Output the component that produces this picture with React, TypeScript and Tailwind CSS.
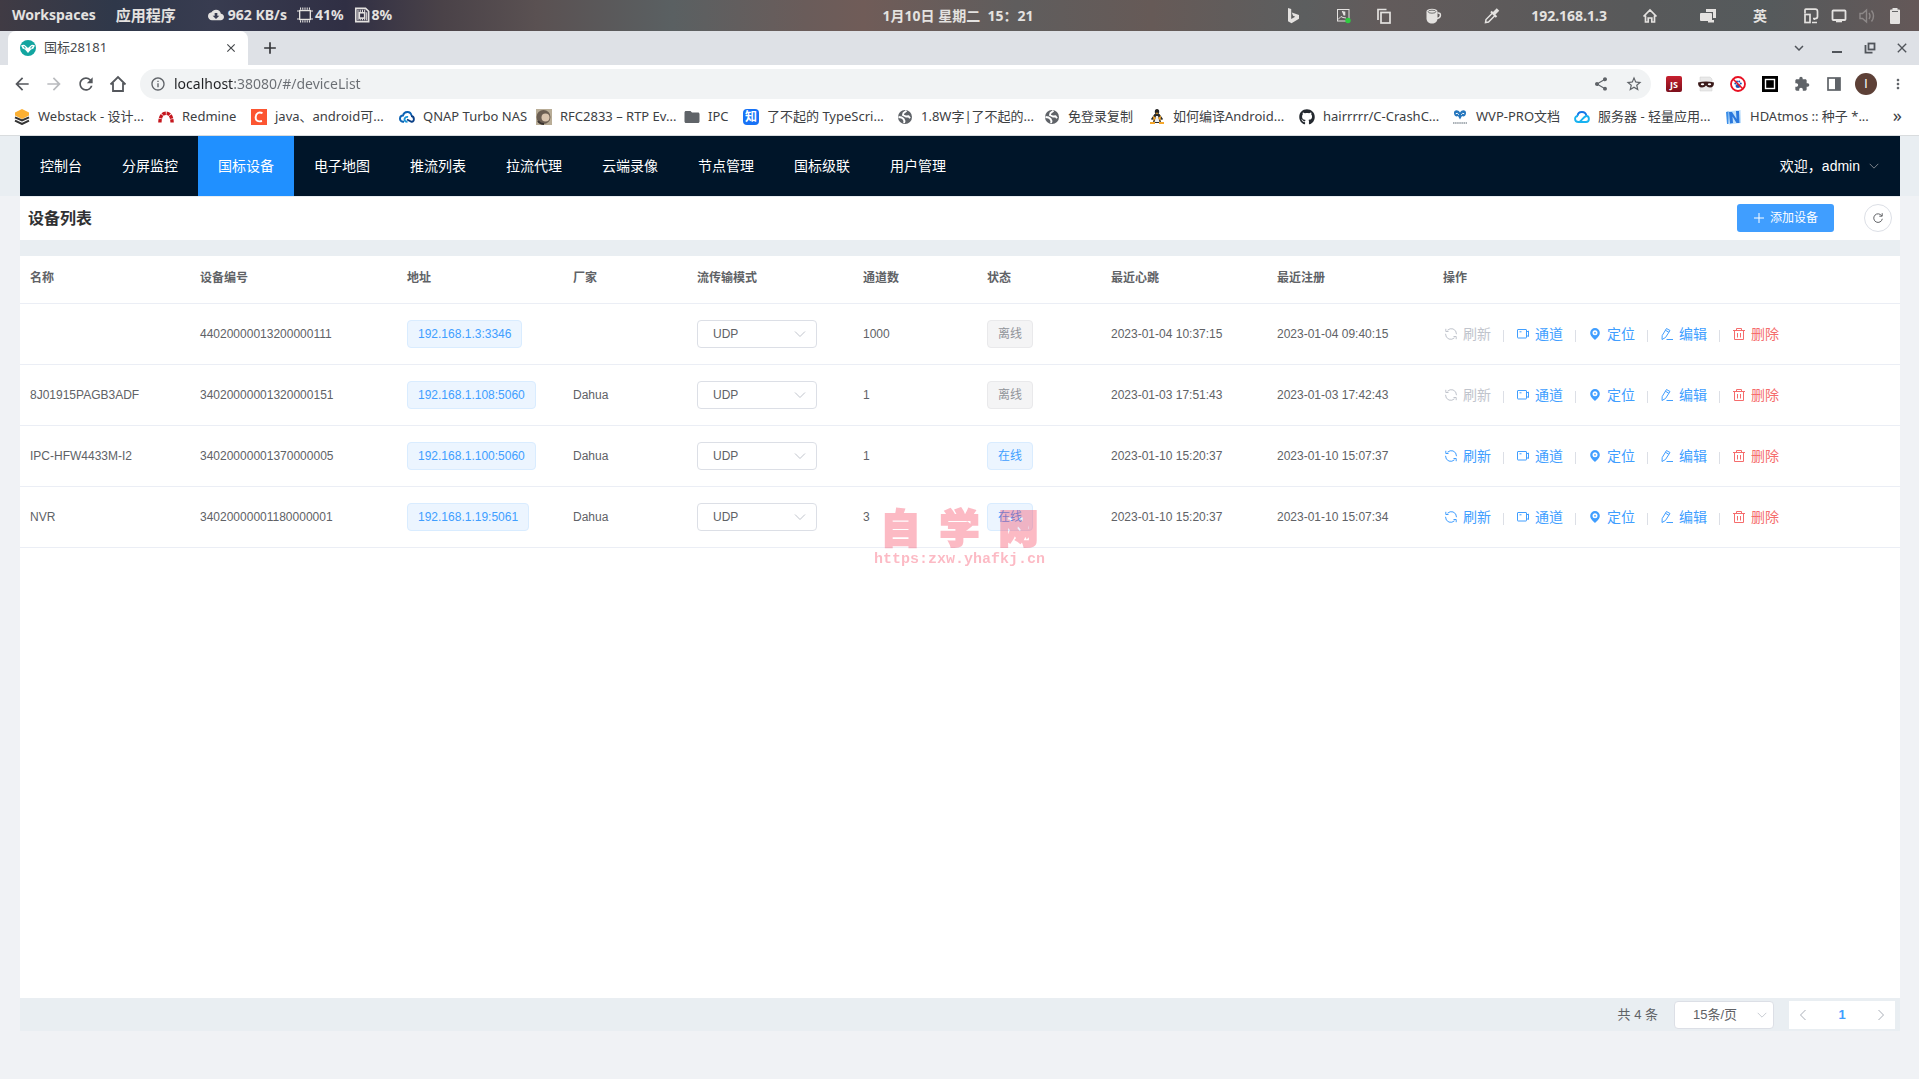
import React from "react";
import {
  MdAdd,
  MdArrowBack,
  MdArrowForward,
  MdClose,
  MdCloudDownload,
  MdExtension,
  MdFolder,
  MdInfoOutline,
  MdKeyboardArrowDown,
  MdMoreVert,
  MdPublic,
  MdRefresh,
  MdShare,
  MdStarBorder,
} from "react-icons/md";
import { FaGithub } from "react-icons/fa";

type IconProps = { className?: string };

/* ---------- desktop panel icons ---------- */

const BingIcon = () => (
  <svg viewBox="0 0 18 18" className="size-[18px]" fill="currentColor">
    <path d="M3 1l3.200 1.100v10l4-2.300-2.200-1L6.800 5.500 14 8v3.800L6.500 16.300 3 14.200z" />
  </svg>
);
const PictureIcon = () => (
  <svg viewBox="0 0 18 18" className="size-[18px]" fill="none" stroke="currentColor">
    <rect x="2.500" y="2.500" width="11.500" height="11.500" />
    <path d="M3 12.500l3-3 2 1 3 .5" />
    <path d="M7.500 4l2 4.500M9.500 8.500V4.500" strokeWidth="1.600" />
    <circle cx="13" cy="13.500" r="2.700" fill="#2ecc40" stroke="none" />
  </svg>
);
const CopyIcon = () => (
  <svg viewBox="0 0 18 18" className="size-[18px]" fill="none" stroke="currentColor" strokeWidth="1.700">
    <path d="M3 13V2.500h8.500" />
    <rect x="6" y="5.500" width="9" height="10.500" />
  </svg>
);
const MugIcon = () => (
  <svg viewBox="0 0 18 18" className="size-[18px]">
    <path d="M1.500 5v6.500c0 3 2.500 5 5.500 5s5.500-2 5.500-5V5z" fill="currentColor" />
    <ellipse cx="7" cy="4.500" rx="5.500" ry="2.700" fill="currentColor" />
    <ellipse cx="7" cy="4.700" rx="3.900" ry="1.500" fill="none" stroke="#666" strokeWidth=".9" />
    <path d="M12.500 6c4-1 4 5-.5 5.500" fill="none" stroke="currentColor" strokeWidth="1.500" />
  </svg>
);
const DropperIcon = () => (
  <svg viewBox="0 0 18 18" className="size-[18px]" fill="none" stroke="currentColor" strokeWidth="1.500">
    <path d="M9.500 6L3 12.500 2.500 15.500 5.500 15 12 8.500" />
    <path d="M8 4.500l5.500 5.500" strokeWidth="2" />
    <path d="M10.500 7l4.500-4.500" strokeWidth="3.500" />
  </svg>
);
const PanelHomeIcon = () => (
  <svg viewBox="0 0 18 18" className="size-[18px]" fill="none" stroke="currentColor" strokeWidth="1.700">
    <path d="M2.500 9.500L9 3l6.500 6.500M4.500 8.500V15h2.700v-4h3.600v4h2.700V8.500" />
  </svg>
);
const WindowsIcon = () => (
  <svg viewBox="0 0 18 18" className="size-[18px]" fill="currentColor">
    <path d="M7 2h10v9h-3V5H7z" />
    <rect x="1" y="6" width="12" height="8" rx="1" />
    <rect x="9" y="13" width="6" height="2.500" />
  </svg>
);
const DevicesIcon = () => (
  <svg viewBox="0 0 18 18" className="size-[18px]" fill="none" stroke="currentColor" strokeWidth="1.700">
    <path d="M3 6.500V3q0-.8.8-.8h9.400q2.300 0 2.300 2.300v5q0 2-2 2H11" />
    <rect x="3" y="7.500" width="5" height="8" />
    <path d="M10 15.500h5M12.500 11.500v1.500" />
  </svg>
);
const MonitorIcon = () => (
  <svg viewBox="0 0 18 18" className="size-[18px]" fill="none" stroke="currentColor" strokeWidth="1.800">
    <rect x="2.500" y="3.500" width="13" height="9.500" rx=".8" />
    <path d="M6 14.300h6" strokeWidth="2" />
  </svg>
);
const SpeakerIcon = () => (
  <svg viewBox="0 0 18 18" className="size-[18px] opacity-35" fill="none" stroke="currentColor" strokeWidth="1.400">
    <path d="M2 6.500h2.500L8.500 3v12l-4-3.500H2z" />
    <path d="M11 6q2 3 0 6M13.500 3.500q4 5.500 0 11" />
  </svg>
);
const BatteryIcon = () => (
  <svg viewBox="0 0 18 18" className="size-[18px]" fill="currentColor">
    <path d="M6.500 1h5v1.500H13q1 0 1 1V16q0 1-1 1H5q-1 0-1-1V3.500q0-1 1-1h1.500z" />
    <path d="M6 4.500h6" stroke="#666" strokeWidth="1" />
  </svg>
);
const ChipIcon = () => (
  <svg viewBox="0 0 18 18" className="size-4" fill="none" stroke="currentColor" strokeWidth="1.500">
    <rect x="3" y="4" width="12" height="10" />
    <path
      d="M4 .5V3M6.500 .5V3M9 .5V3M11.500 .5V3M14 .5V3M4 15v2.500M6.500 15v2.500M9 15v2.500M11.500 15v2.500M14 15v2.500M0 4.500h3M15 4.500h3M0 13.500h3M15 13.500h3"
      strokeWidth="1.200"
    />
  </svg>
);
const MemoryIcon = () => (
  <svg viewBox="0 0 18 18" className="size-4" fill="none" stroke="currentColor">
    <path d="M2 1.500h11L16.500 5v11.500H2z" strokeWidth="1.800" />
    <rect x="6" y="6.500" width="6" height="6" strokeWidth="1.800" />
    <path d="M4.500 3v12M7 3v3M9.500 3v3M12 3v3M14.300 6v9M7 13v2M9.500 13v2M12 13v2" strokeWidth="1.200" />
  </svg>
);

/* ---------- browser icons ---------- */

const HomeIcon = () => (
  <svg viewBox="0 0 20 20" className="size-5" fill="none" stroke="currentColor" strokeWidth="1.800">
    <path d="M2.500 10.500L10 3l7.500 7.500M5 9v8h10V9" />
  </svg>
);
const RestoreIcon = () => (
  <svg viewBox="0 0 12 12" className="size-3" fill="none" stroke="currentColor" strokeWidth="1.800">
    <rect x="4.500" y="1.500" width="6" height="6" />
    <path d="M1.500 3v7.700H8.500" />
  </svg>
);
const SiteIcon = () => (
  <svg viewBox="0 0 16 16" className="size-4">
    <circle cx="8" cy="8" r="8" fill="#12a5a0" />
    <path
      d="M1 5.500c2-1 3.500-1 4.500.3L8 8l2.500-2.200c1-1.300 2.500-1.300 4.500-.3-.5 1-1 1.500-1.500 3L11 9.500 8 13 5 9.500l-2.500-1C2 7 1.500 6.500 1 5.500z"
      fill="#fff"
    />
    <path d="M3.500 6.500q2 0 1.500 2M12.500 6.500q-2 0-1.500 2" fill="none" stroke="#12a5a0" />
  </svg>
);
const StackIcon = () => (
  <svg viewBox="0 0 16 16" className="size-4">
    <path d="M8 0l7 3.500v3L8 10 1 6.500v-3z" fill="#fbb034" />
    <path d="M1 8.300l7 3.200 7-3.200M1 11.700l7 3.300 7-3.300" fill="none" stroke="#333" strokeWidth="2" />
  </svg>
);
const RedmineIcon = () => (
  <svg viewBox="0 0 16 16" className="size-4" fill="none" strokeWidth="3.400">
    <path d="M1.900 13.500C2 8 4 4.200 8 4.200s6 3.800 6.100 9.300" stroke="#c5161d" strokeDasharray="3.600 .7" />
  </svg>
);
const CsdnIcon = () => (
  <svg viewBox="0 0 16 16" className="size-4">
    <rect width="16" height="16" fill="#fc5531" />
    <path d="M11.500 4.200C8 2.500 5 4.200 4.700 8s2 5 6.300 4" fill="none" stroke="#fff" strokeWidth="1.900" />
  </svg>
);
const QnapIcon = () => (
  <svg viewBox="0 0 16 16" className="size-4" fill="none" strokeWidth="1.900">
    <path d="M5 12.800H4C-.5 12 .5 6.500 4 6.500 5 2 11.500 1.500 12.500 6.500" stroke="#0b62b4" />
    <path d="M12 7c3.500 0 4 5.800.5 5.800L8 10.500" stroke="#0a3f86" />
    <path d="M8.500 12.800c-5 0-3-6 .5-4.800" stroke="#1a94d8" />
  </svg>
);
const PhotoIcon = () => (
  <svg viewBox="0 0 16 16" className="size-4">
    <rect width="16" height="16" fill="#b9ad97" />
    <circle cx="7.500" cy="8" r="7" fill="#6b5e52" />
    <circle cx="9.500" cy="8.500" r="4" fill="#d9c4ae" />
    <path d="M2 12q2 3 6 3" stroke="#3a3430" strokeWidth="2" fill="none" />
  </svg>
);
const ZhihuIcon = () => (
  <span className="flex size-4 items-center justify-center rounded-sm bg-[#1772f6] text-xs leading-none font-bold text-white">
    知
  </span>
);
const PenguinIcon = () => (
  <svg viewBox="0 0 16 16" className="size-4">
    <ellipse cx="8" cy="2.800" rx="2.200" ry="2.800" fill="#222" />
    <path d="M5.500 5h5l3.500 5-1 1-1.500-1 .5 4H4l.5-4L3 11l-1-1z" fill="#2b2b2b" />
    <path d="M7 7h2l1.500 6h-5z" fill="#eee" />
    <path d="M6.500 3.800h3L8 5.300zM4 6.500l3 2.500-2.500 3zM12 6.500L9 9l2.500 3zM1 13h5v2H1zM10 13h5v2h-5z" fill="#f5a72c" />
  </svg>
);
const WvpIcon = () => (
  <svg viewBox="0 0 16 16" className="size-4">
    <path
      d="M2 4.500C1.500 1 6 0 8 3.500 10 0 14.500 1 14 4.500c-.3 2.500-2.500 3.500-4 2.500L8 10.500 6 7C4.500 8 2.300 7 2 4.500z"
      fill="#2576bd"
    />
    <path d="M3.800 4.700q1.700-1.200 3 1M12.200 4.700q-1.700-1.200-3 1" stroke="#fff" fill="none" />
    <path d="M1 14h14" stroke="#a9b0b6" strokeWidth="1.800" strokeDasharray="1.500 .6" />
  </svg>
);
const CloudIcon = () => (
  <svg viewBox="0 0 16 16" className="size-4" fill="none" strokeWidth="1.900">
    <path d="M3.500 7C4 2 11.500 1.500 12.500 7" stroke="#1677e8" />
    <path d="M4 7C0 7 0 13 4.500 13H12c4 0 3.500-6 .5-6-1.500 0-2 1-6.500 5.500" stroke="#18b2f0" />
  </svg>
);
const HdIcon = () => (
  <svg viewBox="0 0 16 16" className="size-4">
    <path d="M1 2.500L14.500 1 15 14 3 15.500z" fill="#bfe0fb" />
    <path d="M4 14.500L3 3h3l4.500 7-.5-8h3l.5 12h-3L6.500 7.500 7 14z" fill="#2a78dd" />
    <path d="M0 3l2.500-.5V15H1z" fill="#3d8fe8" />
  </svg>
);
const GlobeIcon = () => (
  <svg viewBox="0 0 16 16" className="size-4">
    <circle cx="8" cy="8" r="7" fill="#5f6368" />
    <path
      d="M9.500 1.800L6.500 4 6 6l3 1.500 2.500-.3 1.500 2M1.500 8l3 .5 2 1.500L7.500 12 7 14"
      fill="none"
      stroke="#fff"
      strokeWidth="1.900"
    />
  </svg>
);
const FolderIcon = () => <MdFolder className="-mx-px size-[18px] text-[#5f6368]" />;
const GithubIcon = () => <FaGithub className="size-4 text-[#24292f]" />;

const JsIcon = () => (
  <span className="flex size-4 items-center justify-center rounded-xs bg-linear-to-b from-[#c8202f] to-[#7c0f1c] text-[9px] leading-none font-bold text-white">
    JS
  </span>
);
const MaskIcon = () => (
  <svg viewBox="0 0 16 16" className="size-4">
    <path d="M2 1h10l2 2v12H2z" fill="#e9e9e9" stroke="#cfcfcf" strokeWidth=".5" />
    <path d="M0 6.500q8-2 16 0 0 5-4 5-2.500 0-4-2-1.500 2-4 2-4 0-4-5z" fill="#3a1a1a" />
    <ellipse cx="4.500" cy="8.300" rx="1.700" ry="1" fill="#fff" />
    <ellipse cx="11.500" cy="8.300" rx="1.700" ry="1" fill="#fff" />
  </svg>
);
const BlockIcon = () => (
  <svg viewBox="0 0 16 16" className="size-4">
    <circle cx="8" cy="8" r="7" fill="#fff" stroke="#e81123" strokeWidth="1.800" />
    <g fill="#1c55b5">
      <ellipse cx="8" cy="10" rx="2.500" ry="2" />
      <circle cx="5.300" cy="7.500" r="1" />
      <circle cx="7" cy="5.500" r="1" />
      <circle cx="9.200" cy="5.500" r="1" />
      <circle cx="10.800" cy="7.500" r="1" />
    </g>
    <path d="M3 3l10 10" stroke="#e81123" strokeWidth="1.600" />
  </svg>
);
const SquareIcon = () => (
  <svg viewBox="0 0 16 16" className="size-4">
    <rect width="16" height="16" fill="#000" />
    <rect x="3.500" y="3.500" width="9" height="9" fill="#000" stroke="#fff" strokeWidth="1.400" />
  </svg>
);
const SidePanelIcon = () => (
  <svg viewBox="0 0 16 16" className="size-4 text-[#5f6368]">
    <rect x="2" y="2" width="12" height="12" fill="none" stroke="currentColor" strokeWidth="1.700" />
    <rect x="9" y="2" width="5" height="12" fill="currentColor" />
  </svg>
);

/* ---------- application icons ---------- */

const Chevron = ({ className = "" }: IconProps) => (
  <svg viewBox="0 0 14 14" className={className} fill="none" stroke="currentColor">
    <path d="M2 4.500l5 5 5-5" />
  </svg>
);
const SyncIcon = () => (
  <svg viewBox="0 0 14 14" className="size-3.5" fill="none" stroke="currentColor">
    <path d="M3.500 3.200Q6 1 9 1.900q3.500 1.300 3.500 5.300" />
    <path d="M10.500 10.800Q8 13 5 12.100 1.500 10.800 1.500 6.800" />
    <path d="M4.500 4.500H1.800V1.800M9.500 9.500h2.700v2.700" />
  </svg>
);
const VideoIcon = () => (
  <svg viewBox="0 0 14 14" className="size-3.5" fill="none" stroke="currentColor">
    <rect x="1.500" y="2.500" width="9" height="8.500" rx=".5" />
    <path d="M10.500 5l2-1v5.500l-2-1M3.500 4.800h2" />
  </svg>
);
const LocationIcon = () => (
  <svg viewBox="0 0 14 14" className="size-3.5">
    <path
      fillRule="evenodd"
      fill="currentColor"
      d="M7 1a4.800 4.800 0 0 1 4.800 4.800C11.800 9 9 11 7 13 5 11 2.200 9 2.200 5.800A4.800 4.800 0 0 1 7 1zm0 2.300a2.500 2.500 0 1 0 0 5 2.500 2.500 0 0 0 0-5z"
    />
    <circle cx="7" cy="5.800" r=".9" fill="currentColor" />
  </svg>
);
const EditIcon = () => (
  <svg viewBox="0 0 14 14" className="size-3.5" fill="none" stroke="currentColor">
    <path d="M6.500 1.500l3.500 2-4.500 7-3.500 2 .2-4zM5.300 3.200l3.500 2M6.500 12.500H13" />
  </svg>
);
const TrashIcon = () => (
  <svg viewBox="0 0 14 14" className="size-3.5" fill="none" stroke="currentColor">
    <path d="M1 3.500h12M2.500 3.500v9h9v-9M4.500 3.500v-2h5v2M5.500 6v4.500M8.500 6v4.500" />
  </svg>
);

/* ---------- data ---------- */

const bookmarks: { label: string; width: string; Icon: () => React.ReactElement }[] = [
  { label: "Webstack - 设计...", width: "w-[144px]", Icon: StackIcon },
  { label: "Redmine", width: "w-[93px]", Icon: RedmineIcon },
  { label: "java、android可...", width: "w-[148px]", Icon: CsdnIcon },
  { label: "QNAP Turbo NAS", width: "w-[137px]", Icon: QnapIcon },
  { label: "RFC2833 – RTP Ev...", width: "w-[148px]", Icon: PhotoIcon },
  { label: "IPC", width: "w-[59px]", Icon: FolderIcon },
  { label: "了不起的 TypeScri...", width: "w-[154px]", Icon: ZhihuIcon },
  { label: "1.8W字|了不起的...", width: "w-[147px]", Icon: GlobeIcon },
  { label: "免登录复制", width: "w-[105px]", Icon: GlobeIcon },
  { label: "如何编译Android...", width: "w-[150px]", Icon: PenguinIcon },
  { label: "hairrrrr/C-CrashC...", width: "w-[153px]", Icon: GithubIcon },
  { label: "WVP-PRO文档", width: "w-[122px]", Icon: WvpIcon },
  { label: "服务器 - 轻量应用...", width: "w-[152px]", Icon: CloudIcon },
  { label: "HDAtmos :: 种子 *...", width: "w-[150px]", Icon: HdIcon },
];

const navItems = [
  "控制台",
  "分屏监控",
  "国标设备",
  "电子地图",
  "推流列表",
  "拉流代理",
  "云端录像",
  "节点管理",
  "国标级联",
  "用户管理",
];

const columns = [
  { label: "名称", width: "w-[170px]" },
  { label: "设备编号", width: "w-[207px]" },
  { label: "地址", width: "w-[166px]" },
  { label: "厂家", width: "w-[124px]" },
  { label: "流传输模式", width: "w-[166px]" },
  { label: "通道数", width: "w-[124px]" },
  { label: "状态", width: "w-[124px]" },
  { label: "最近心跳", width: "w-[166px]" },
  { label: "最近注册", width: "w-[166px]" },
  { label: "操作", width: "w-[467px]" },
];

const devices = [
  { name: "", id: "44020000013200000111", addr: "192.168.1.3:3346", maker: "", channels: 1000, online: false, beat: "2023-01-04 10:37:15", reg: "2023-01-04 09:40:15" },
  { name: "8J01915PAGB3ADF", id: "34020000001320000151", addr: "192.168.1.108:5060", maker: "Dahua", channels: 1, online: false, beat: "2023-01-03 17:51:43", reg: "2023-01-03 17:42:43" },
  { name: "IPC-HFW4433M-I2", id: "34020000001370000005", addr: "192.168.1.100:5060", maker: "Dahua", channels: 1, online: true, beat: "2023-01-10 15:20:37", reg: "2023-01-10 15:07:37" },
  { name: "NVR", id: "34020000001180000001", addr: "192.168.1.19:5061", maker: "Dahua", channels: 3, online: true, beat: "2023-01-10 15:20:37", reg: "2023-01-10 15:07:34" },
];

/* ---------- sections ---------- */

function DesktopBar() {
  return (
    <header className="flex h-[31px] items-center justify-between bg-[linear-gradient(90deg,#403b44_0%,#2f384a_6%,#383c50_11%,#302f44_18%,#4a4248_23%,#5a5152_28%,#5a6062_35%,#6a5c5a_42%,#705c58_45%,#5f5d5d_53%,#665a57_60%,#5c5e5f_68%,#625b5b_72%,#58595a_85%,#555a5c_92%,#645858_100%)] pr-[15px] pl-3 text-sm font-bold text-[#e4e2e0]">
      <div className="flex flex-1 items-center">
        <button>Workspaces</button>
        <button className="ml-5 text-[15px]">应用程序</button>
        <span className="ml-8 flex items-center gap-1">
          <MdCloudDownload className="size-4" />
          962 KB/s
        </span>
        <span className="ml-2.5 flex items-center gap-0.5">
          <ChipIcon />
          41%
        </span>
        <span className="ml-2.5 flex items-center gap-0.5">
          <MemoryIcon />
          8%
        </span>
      </div>
      <time className="whitespace-pre">1月10日 星期二  15：21</time>
      <div className="flex flex-1 items-center justify-end">
        <BingIcon />
        <span className="ml-8">
          <PictureIcon />
        </span>
        <span className="ml-[22px]">
          <CopyIcon />
        </span>
        <span className="ml-8">
          <MugIcon />
        </span>
        <span className="ml-10">
          <DropperIcon />
        </span>
        <span className="ml-[30px]">192.168.1.3</span>
        <span className="ml-[34px]">
          <PanelHomeIcon />
        </span>
        <span className="ml-10">
          <WindowsIcon />
        </span>
        <span className="mr-6 ml-9">英</span>
        <div className="ml-[11px] flex items-center gap-2.5">
          <DevicesIcon />
          <MonitorIcon />
          <SpeakerIcon />
          <BatteryIcon />
        </div>
      </div>
    </header>
  );
}

function TabStrip() {
  return (
    <div className="flex h-[34px] items-center bg-[#dee1e6] pr-[9px] pl-2 text-[#45484c]">
      <div className="flex h-full w-60 items-center rounded-t-lg bg-white pr-2.5 pl-3 text-[13px]">
        <SiteIcon />
        <span className="ml-2 flex-1">国标28181</span>
        <button aria-label="关闭标签页">
          <MdClose className="size-3.5" />
        </button>
      </div>
      <button aria-label="新建标签页" className="ml-3 text-[#35363a]">
        <MdAdd className="size-5" />
      </button>
      <div className="ml-auto flex items-center text-[#50545a]">
        <button aria-label="搜索标签页" className="mr-6">
          <MdKeyboardArrowDown className="size-[18px]" />
        </button>
        <button aria-label="最小化" className="mr-[22px] flex h-2.5 w-2.5 items-end">
          <span className="h-0.5 w-full bg-current" />
        </button>
        <button aria-label="还原" className="mr-[18px]">
          <RestoreIcon />
        </button>
        <button aria-label="关闭">
          <MdClose className="size-4" />
        </button>
      </div>
    </div>
  );
}

function Toolbar() {
  return (
    <div className="flex h-[38px] items-center bg-white pr-[13px] pl-3 text-[#5f6368]">
      <div className="flex w-32 items-center gap-3 text-[#54575c]">
        <button aria-label="后退">
          <MdArrowBack className="size-5" />
        </button>
        <button aria-label="前进" className="text-[#b9bbbe]">
          <MdArrowForward className="size-5" />
        </button>
        <button aria-label="刷新页面">
          <MdRefresh className="size-5" />
        </button>
        <button aria-label="主页">
          <HomeIcon />
        </button>
      </div>
      <div className="flex h-[30px] flex-1 items-center rounded-full bg-[#f1f3f4] pr-2 pl-2.5">
        <MdInfoOutline className="size-4" />
        <input
          aria-label="地址栏"
          defaultValue="localhost:38080/#/deviceList"
          className="ml-2 flex-1 bg-[linear-gradient(90deg,#202124_59px,#6a6e73_59px)] bg-clip-text text-sm text-transparent outline-none"
        />
        <button aria-label="分享" className="mr-4">
          <MdShare className="size-4" />
        </button>
        <button aria-label="收藏">
          <MdStarBorder className="size-[18px]" />
        </button>
      </div>
      <div className="ml-[15px] flex items-center gap-4">
        <JsIcon />
        <MaskIcon />
        <BlockIcon />
        <SquareIcon />
        <MdExtension className="size-4" />
        <SidePanelIcon />
        <button aria-label="用户" className="-mx-[3px] size-[22px] rounded-full bg-[#5d4037] font-['Liberation_Sans',sans-serif] text-xs text-white">
          I
        </button>
        <button aria-label="更多">
          <MdMoreVert className="size-4" />
        </button>
      </div>
    </div>
  );
}

function BookmarkBar() {
  return (
    <nav className="flex h-[33px] items-center border-b border-[#d9dcde] bg-white pb-1 pl-3.5 text-[13px] text-[#3c4043]">
      {bookmarks.map(({ label, width, Icon }, i) => (
        <a key={i} href="#" className={`flex shrink-0 items-center gap-2 whitespace-nowrap ${width}`}>
          <Icon />
          {label}
        </a>
      ))}
      <button aria-label="更多书签" className="mr-[17px] mb-1 ml-auto text-lg leading-none">
        »
      </button>
    </nav>
  );
}

function Tag({ blue, children }: { blue: boolean; children: React.ReactNode }) {
  return (
    <span
      className={
        blue
          ? "inline-flex h-7 items-center rounded border border-[#d9ecff] bg-[#ecf5ff] px-2.5 text-[#409eff]"
          : "inline-flex h-7 items-center rounded border border-[#e9e9eb] bg-[#f4f4f5] px-2.5 text-[#909399]"
      }
    >
      {children}
    </span>
  );
}

function Select({
  label,
  options,
  className,
  chevron,
}: {
  label: string;
  options: string[];
  className: string;
  chevron: string;
}) {
  return (
    <span className="relative inline-flex items-center">
      <select
        aria-label={label}
        className={`h-7 appearance-none rounded border border-[#dcdfe6] bg-white text-[#606266] ${className}`}
      >
        {options.map((o) => (
          <option key={o}>{o}</option>
        ))}
      </select>
      <Chevron className={`pointer-events-none absolute text-[#c0c4cc] ${chevron}`} />
    </span>
  );
}

function Actions({ online }: { online: boolean }) {
  const actions = [
    { label: "刷新", Icon: SyncIcon, color: online ? "text-[#409eff]" : "text-[#c0c4cc]", disabled: !online },
    { label: "通道", Icon: VideoIcon, color: "text-[#409eff]", disabled: false },
    { label: "定位", Icon: LocationIcon, color: "text-[#409eff]", disabled: false },
    { label: "编辑", Icon: EditIcon, color: "text-[#409eff]", disabled: false },
    { label: "删除", Icon: TrashIcon, color: "text-[#f56c6c]", disabled: false },
  ];
  return (
    <div className="flex items-center pl-px">
      {actions.map(({ label, Icon, color, disabled }, i) => (
        <React.Fragment key={label}>
          {i > 0 && <span className="mx-3 mt-1 h-3 w-px bg-[#dcdfe6]" />}
          <button disabled={disabled} className={`flex items-center gap-[5px] text-sm ${color}`}>
            <Icon />
            {label}
          </button>
        </React.Fragment>
      ))}
    </div>
  );
}

function DeviceTable() {
  return (
    <table className="w-full table-fixed border-collapse text-left text-xs text-[#606266]">
      <thead>
        <tr className="h-[47px] border-b border-[#ebeef5]">
          {columns.map((c) => (
            <th key={c.label} className={`px-2.5 pb-0.5 font-bold ${c.width}`}>
              {c.label}
            </th>
          ))}
        </tr>
      </thead>
      <tbody>
        {devices.map((d) => (
          <tr key={d.id} className="h-[61px] border-b border-[#ebeef5]">
            <td className="px-2.5">{d.name}</td>
            <td className="px-2.5">{d.id}</td>
            <td className="px-2.5">
              <Tag blue>{d.addr}</Tag>
            </td>
            <td className="px-2.5">{d.maker}</td>
            <td className="px-2.5">
              <Select
                label="流传输模式"
                options={["UDP", "TCP"]}
                className="w-[120px] pl-[15px]"
                chevron="right-2.5 size-3.5"
              />
            </td>
            <td className="px-2.5">{d.channels}</td>
            <td className="px-2.5">
              <Tag blue={d.online}>{d.online ? "在线" : "离线"}</Tag>
            </td>
            <td className="px-2.5">{d.beat}</td>
            <td className="px-2.5">{d.reg}</td>
            <td className="px-2.5">
              <Actions online={d.online} />
            </td>
          </tr>
        ))}
      </tbody>
    </table>
  );
}

function Pagination() {
  return (
    <footer className="flex h-[33px] items-center justify-end bg-[#e9eef2] pr-[5px] text-[13px] text-[#606266]">
      <span className="mr-4">共 4 条</span>
      <Select
        label="每页条数"
        options={["15条/页", "25条/页"]}
        className="w-[100px] pl-[18px]"
        chevron="right-1.5 size-3"
      />
      <div className="ml-[15px] flex h-7 w-[106px] items-center justify-between bg-white px-[7px]">
        <button aria-label="上一页" disabled>
          <Chevron className="size-3.5 rotate-90 text-[#a8adb6]" />
        </button>
        <button aria-current="page" className="font-bold text-[#409eff]">
          1
        </button>
        <button aria-label="下一页" disabled>
          <Chevron className="size-3.5 -rotate-90 text-[#a8adb6]" />
        </button>
      </div>
    </footer>
  );
}

function Watermark() {
  return (
    <div className="pointer-events-none absolute top-[371px] left-1/2 flex -translate-x-1/2 flex-col items-center font-bold text-[#f73c5a] opacity-35">
      <div className="flex gap-[19px] text-[40px] leading-[45px] font-black [-webkit-text-stroke:2px_#f73c5a]">
        <span>自</span>
        <span>学</span>
        <span>网</span>
      </div>
      <span className="font-['Liberation_Mono','Noto_Sans_CJK_SC',monospace] text-[15px] leading-4">
        https:zxw.yhafkj.cn
      </span>
    </div>
  );
}

export default function App() {
  return (
    <div className="flex min-h-screen flex-col bg-[#f0f2f5]">
      <div className="font-['Noto_Sans','Noto_Sans_CJK_SC',sans-serif]">
        <DesktopBar />
        <TabStrip />
        <Toolbar />
        <BookmarkBar />
      </div>
      <div className="relative flex flex-1 flex-col font-['Liberation_Sans','Noto_Sans_CJK_SC',sans-serif]">
        <header className="bg-[#e9eef2] pr-[19px] pl-5">
          <nav className="flex h-[60px] bg-[#001529] text-sm text-white">
            {navItems.map((item) => (
              <a
                key={item}
                href="#"
                className={
                  item === "国标设备"
                    ? "flex items-center bg-[#2090ff] px-5"
                    : "flex items-center px-5"
                }
              >
                {item}
              </a>
            ))}
            <button className="ml-auto flex items-center gap-2 pr-5">
              欢迎，admin
              <Chevron className="size-3 text-[#909399]" />
            </button>
          </nav>
        </header>
        <main className="mr-[19px] mb-12 ml-5 flex flex-1 flex-col">
          <div className="flex h-11 items-center border-t border-[#e9eef2] bg-white pr-2 pl-2">
            <h1 className="text-base font-bold text-[#303133]">设备列表</h1>
            <button className="mb-0.5 ml-auto flex h-7 items-center gap-[5px] rounded-[3px] bg-[#409eff] px-4 text-xs text-white">
              <svg viewBox="0 0 12 12" className="size-3" stroke="currentColor">
                <path d="M6 1v10M1 6h10" />
              </svg>
              添加设备
            </button>
            <button
              aria-label="刷新列表"
              className="mb-0.5 ml-[30px] flex size-7 items-center justify-center rounded-full border border-[#dcdfe6] text-[#606266]"
            >
              <svg viewBox="0 0 12 12" className="size-3" fill="none" stroke="currentColor">
                <path d="M9.800 4A4.300 4.300 0 1 0 10.300 6.800M10.200 1.200v3H7.300" />
              </svg>
            </button>
          </div>
          <div className="h-4 bg-[#e9eef2]" />
          <div className="flex-1 bg-white">
            <DeviceTable />
          </div>
          <Pagination />
        </main>
        <Watermark />
      </div>
    </div>
  );
}
